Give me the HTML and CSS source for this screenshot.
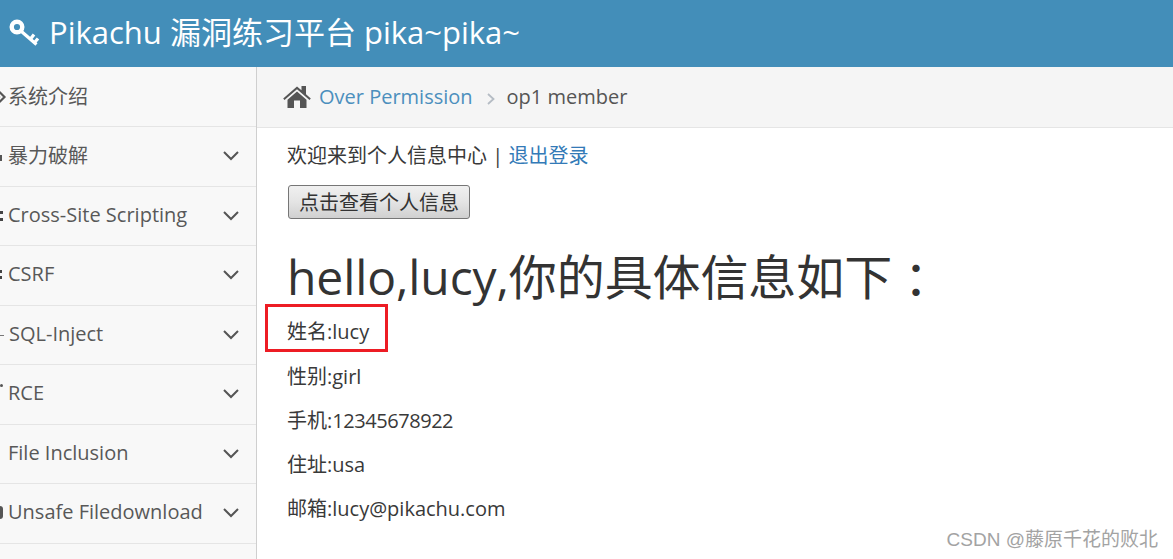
FILE: index.html
```html
<!DOCTYPE html>
<html lang="zh">
<head>
<meta charset="utf-8">
<title>Pikachu</title>
<link rel="stylesheet" href="styles.css">
</head>
<body>
<header class="topbar">
  <svg class="key" viewBox="0 0 32 32" width="32" height="32"><ellipse cx="8" cy="10" rx="5.300" ry="5.300" fill="none" stroke="#fff" stroke-width="4.400"/><path d="M12.500 14.500 L27.500 27.500 M21.500 22 L25 17.500 M25.500 25.500 L29 21.500" fill="none" stroke="#fff" stroke-width="3.200"/></svg>
  <span class="brand">Pikachu 漏洞练习平台 pika~pika~</span>
</header>
<div class="layout">
  <nav class="sidebar">
    <div class="item first"><svg class="ico" viewBox="0 0 8 18" width="8" height="18"><path d="M-1 3.500 L4.500 9 L-1 14.500 M-3 7 L-1 9 L-3 11" fill="none" stroke="#555" stroke-width="2.200"/></svg><span class="label">系统介绍</span></div>
    <div class="item"><span class="ico stub"><i class="bar"></i></span><span class="label cjk">暴力破解</span><svg class="chev" viewBox="0 0 16 10" width="16" height="10"><path d="M1 1 L8 8 L15 1" fill="none" stroke="#555" stroke-width="2"/></svg></div>
    <div class="item"><span class="ico stub"><i class="dots"></i></span><span class="label">Cross-Site Scripting</span><svg class="chev" viewBox="0 0 16 10" width="16" height="10"><path d="M1 1 L8 8 L15 1" fill="none" stroke="#555" stroke-width="2"/></svg></div>
    <div class="item"><span class="ico stub"><i class="dots small"></i></span><span class="label">CSRF</span><svg class="chev" viewBox="0 0 16 10" width="16" height="10"><path d="M1 1 L8 8 L15 1" fill="none" stroke="#555" stroke-width="2"/></svg></div>
    <div class="item"><span class="ico stub"><i class="dash"></i></span><span class="label shifted">SQL-Inject</span><svg class="chev" viewBox="0 0 16 10" width="16" height="10"><path d="M1 1 L8 8 L15 1" fill="none" stroke="#555" stroke-width="2"/></svg></div>
    <div class="item"><span class="ico stub"><i class="dot"></i></span><span class="label">RCE</span><svg class="chev" viewBox="0 0 16 10" width="16" height="10"><path d="M1 1 L8 8 L15 1" fill="none" stroke="#555" stroke-width="2"/></svg></div>
    <div class="item"><span class="ico stub"></span><span class="label">File Inclusion</span><svg class="chev" viewBox="0 0 16 10" width="16" height="10"><path d="M1 1 L8 8 L15 1" fill="none" stroke="#555" stroke-width="2"/></svg></div>
    <div class="item"><span class="ico stub"><i class="round"></i></span><span class="label">Unsafe Filedownload</span><svg class="chev" viewBox="0 0 16 10" width="16" height="10"><path d="M1 1 L8 8 L15 1" fill="none" stroke="#555" stroke-width="2"/></svg></div>
  </nav>
  <main class="content">
    <div class="crumbs">
      <svg class="home" viewBox="0 0 28 23" width="28" height="23"><path d="M14 1.500 L18.500 5.300 V1 H23 V9.300 L27.800 13.500 L26.500 15 L14 4.300 L1.500 15 L.2 13.500 Z" fill="#555"/><path d="M14 6.600 L23.500 14.800 V23 H17 V15.500 H11 V23 H4.500 V14.800 Z" fill="#555"/></svg>
      <a class="crumb-link">Over Permission</a>
      <svg class="sep" viewBox="0 0 8 12" width="8" height="12"><path d="M1 1 L6.500 6 L1 11" fill="none" stroke="#b5bcc4" stroke-width="1.800"/></svg>
      <span class="crumb-current">op1 member</span>
    </div>
    <div class="page">
      <p class="welcome">欢迎来到个人信息中心 | <a class="link">退出登录</a></p>
      <button class="btn" type="button">点击查看个人信息</button>
      <h1 class="title">hello,lucy,你的具体信息如下<span class="colon">：</span></h1>
      <div class="highlight-wrap">
        <p class="row">姓名:lucy</p>
        <span class="redbox"></span>
      </div>
      <p class="row">性别:girl</p>
      <p class="row">手机:<span class="digits">12345678922</span></p>
      <p class="row">住址:usa</p>
      <p class="row">邮箱:lucy@pikachu.com</p>
    </div>
  </main>
</div>
<div class="watermark">CSDN @藤原千花的败北</div>
</body>
</html>
```
FILE: styles.css
```css
* { box-sizing: border-box; }
html, body { margin: 0; padding: 0; height: 559px; overflow: hidden; background: #fff; }
body { font-family: "Open Sans", "Noto Sans CJK SC", sans-serif; color: #393939; position: relative; }
.topbar { height: 67px; background: #438eb9; display: flex; align-items: center; padding-left: 9px; color: #fff; }
.key { flex: none; margin-top: -1px; }
.brand { font-size: 31px; margin-left: 8px; line-height: 1; margin-top: -3px; white-space: nowrap; }
.layout { display: flex; height: 492px; }
.sidebar { width: 257px; flex: none; background: #f8f8f8; border-right: 1px solid #cfcfcf; overflow: hidden; padding-top: .5px; }
.item { height: 59.5px; display: flex; align-items: center; border-bottom: 1px solid #e5e5e5; color: #585858; font-size: 20px; padding-right: 17px; }
.ico { flex: none; width: 8px; display: block; }
.stub { height: 20px; position: relative; overflow: hidden; }
.stub i { position: absolute; left: 0; display: block; }
.bar { top: 9px; width: 2px; height: 6px; background: #555; }
.dots { top: 5px; width: 3px; height: 10px; border-top: 3px solid #444; border-bottom: 3px solid #444; }
.small { width: 2px; height: 9px; }
.dash { top: 10px; width: 4px; height: 1.500px; background: #777; }
.dot { top: 0; width: 3px; height: 3px; background: #555; border-radius: 50%; }
.round { top: 3px; width: 3px; height: 13px; background: #555; border-radius: 0 3px 3px 0; }
.label { flex: 1; white-space: nowrap; line-height: 1; margin-top: -2px; }
.shifted { padding-left: 1px; }
.first .label, .cjk { margin-top: 0; }
.chev { flex: none; }
.content { flex: 1; min-width: 0; }
.crumbs { height: 61px; background: #f5f5f5; border-bottom: 1px solid #e5e5e5; display: flex; align-items: center; padding-left: 26px; font-size: 20px; }
.home { flex: none; margin-top: -2px; }
.crumb-link { color: #4c8fbd; margin-left: 8px; margin-top: -2px; }
.sep { margin: 3px 12px 0 14px; flex: none; }
.crumb-current { color: #555; margin-top: -2px; }
.page { padding: 11px 0 0 30px; font-size: 20px; }
.welcome { margin: 0; line-height: 34px; white-space: nowrap; color: #393939; }
.link { color: #337ab7; }
.btn { display: block; margin: 12px 0 0 1px; width: 182px; height: 34px; padding: 1px 0 0; font-family: inherit; font-size: 20px; line-height: 1; color: #333; border: 1px solid #767676; border-radius: 3px; background: linear-gradient(#f0f0f0, #e4e4e4 50%, #d0d0d0); }
.title { margin: 20px 0 4px; font-size: 48px; font-weight: 400; line-height: 76px; color: #333; white-space: nowrap; letter-spacing: -.1px; }
.colon { padding-left: 12px; }
.row { margin: 0 0 14.300px; line-height: 30px; white-space: nowrap; color: #393939; }
.digits { letter-spacing: -.45px; }
.highlight-wrap { position: relative; margin-top: -1.800px; }
.redbox { position: absolute; left: -22px; top: -13px; width: 123px; height: 48px; border: 3px solid #ed1c24; }
.watermark { position: absolute; right: 15px; top: 527px; font-size: 19px; line-height: 26px; color: #a3a3a3; font-family: "Liberation Sans", "Noto Sans CJK SC", sans-serif; white-space: nowrap; }
```
